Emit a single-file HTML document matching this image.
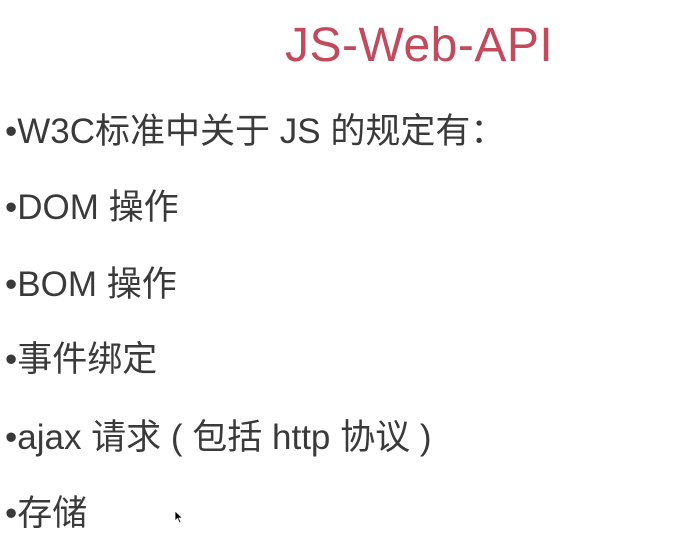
<!DOCTYPE html>
<html><head><meta charset="utf-8"><style>
html,body{margin:0;padding:0;background:#fff;width:698px;height:540px;overflow:hidden;position:relative}
.t{position:absolute;left:285px;top:18px;font:48px/56px "Liberation Sans","Noto Sans CJK SC",sans-serif;color:#c24a5c;letter-spacing:0.5px}
.l{position:absolute;left:5px;font:35px/44px "Liberation Sans","Noto Sans CJK SC",sans-serif;color:#3a3a3a;white-space:nowrap}
.c{position:absolute;left:174px;top:510px}
</style></head><body>
<div class="t">JS-Web-API</div>
<div class="l" style="top:110px">•W3C标准中关于 JS 的规定有：</div>
<div class="l" style="top:186px">•DOM 操作</div>
<div class="l" style="top:263px">•BOM 操作</div>
<div class="l" style="top:338px">•事件绑定</div>
<div class="l" style="top:416px">•ajax 请求 ( 包括 http 协议 )</div>
<div class="l" style="top:492px">•存储</div>
<svg class="c" width="10" height="14" viewBox="0 0 10 14"><path d="M1 1 L1 11 L3.5 8.5 L5.5 13 L7 12.3 L5 8 L8.5 8 Z" fill="#000" stroke="#fff" stroke-width="0.8"/></svg>
</body></html>
